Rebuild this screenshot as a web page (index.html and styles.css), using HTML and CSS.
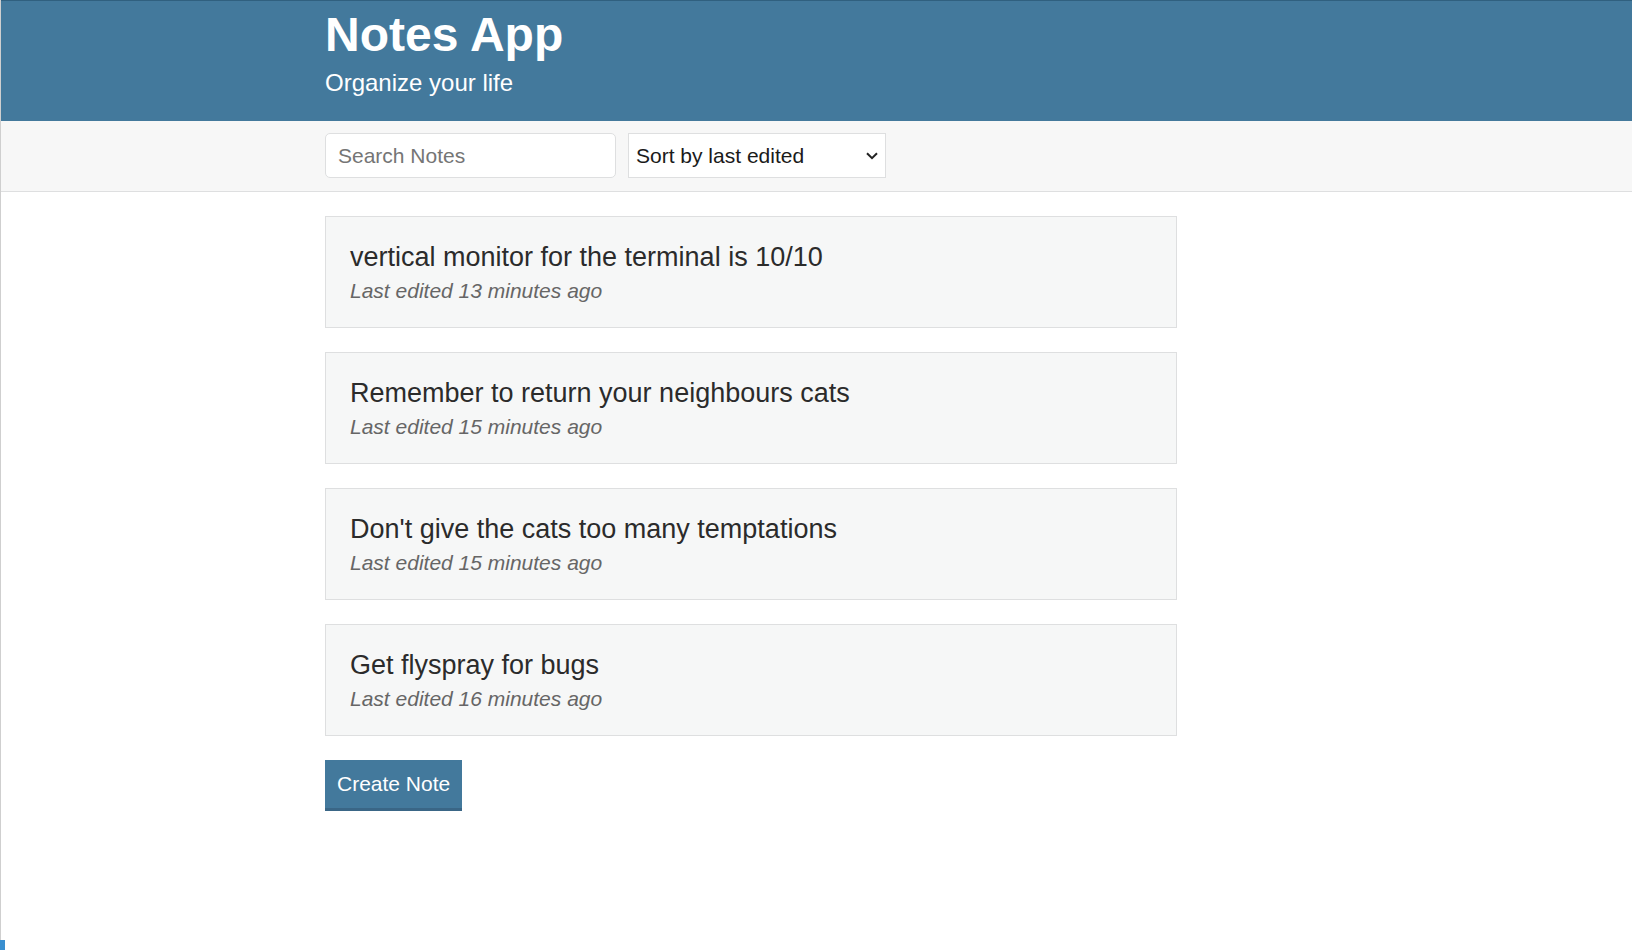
FILE: index.html
```html
<!DOCTYPE html>
<html lang="en">
<head>
<meta charset="utf-8">
<title>Notes App</title>
<link rel="stylesheet" href="styles.css">
</head>
<body>
<div class="page">
  <header class="header">
    <div class="container">
      <h1 class="header__title">Notes App</h1>
      <h2 class="header__subtitle">Organize your life</h2>
    </div>
  </header>
  <div class="actions">
    <div class="container actions__container">
      <input class="input" type="text" placeholder="Search Notes">
      <div class="dropdown-wrap">
        <select class="dropdown">
          <option>Sort by last edited</option>
          <option>Sort by recently created</option>
          <option>Sort alphabetically</option>
        </select>
        <svg class="dropdown__arrow" width="12" height="8" viewBox="0 0 12 8"><path d="M1 1.2 L6 6.2 L11 1.2" fill="none" stroke="#222" stroke-width="2"/></svg>
      </div>
    </div>
  </div>
  <main class="container notes">
    <a class="list-item" href="#">
      <p class="list-item__title">vertical monitor for the terminal is 10/10</p>
      <p class="list-item__subtitle">Last edited 13 minutes ago</p>
    </a>
    <a class="list-item" href="#">
      <p class="list-item__title">Remember to return your neighbours cats</p>
      <p class="list-item__subtitle">Last edited 15 minutes ago</p>
    </a>
    <a class="list-item" href="#">
      <p class="list-item__title">Don't give the cats too many temptations</p>
      <p class="list-item__subtitle">Last edited 15 minutes ago</p>
    </a>
    <a class="list-item" href="#">
      <p class="list-item__title">Get flyspray for bugs</p>
      <p class="list-item__subtitle">Last edited 16 minutes ago</p>
    </a>
    <button class="button">Create Note</button>
  </main>
  <span class="corner-mark"></span>
</div>
</body>
</html>
```
FILE: styles.css
```css
* {
  box-sizing: border-box;
}

html, body {
  margin: 0;
  padding: 0;
  background: #ffffff;
}

body {
  font-family: "Liberation Sans", Arial, Helvetica, sans-serif;
  color: #333333;
  font-size: 21px;
}

.page {
  position: relative;
  min-height: 950px;
  border-left: 1px solid #cfcfcf;
}

.container {
  width: 852px;
  margin-left: 324px;
}

.header {
  background: #43799c;
  border-top: 1px solid #30607f;
  color: #ffffff;
  padding: 8px 0 24px;
}

.header__title {
  margin: 0;
  font-size: 48px;
  line-height: 52px;
  font-weight: bold;
}

.header__subtitle {
  margin: 8px 0 0;
  font-size: 24px;
  line-height: 28px;
  font-weight: normal;
}

.actions {
  background: #f7f7f7;
  border-bottom: 1px solid #dedfe0;
  padding: 12px 0 13px;
}

.actions__container {
  display: flex;
  align-items: center;
}

.input {
  width: 291px;
  height: 45px;
  margin: 0 12px 0 0;
  padding: 6px 12px;
  border: 1px solid #dedfe0;
  border-radius: 5px;
  background: #ffffff;
  font-family: "Liberation Sans", Arial, sans-serif;
  font-size: 21px;
  color: #333333;
  outline: none;
}

.input::placeholder {
  color: #757575;
}

.dropdown-wrap {
  position: relative;
  display: block;
}

.dropdown {
  -webkit-appearance: none;
  appearance: none;
  display: block;
  width: 258px;
  height: 45px;
  margin: 0;
  padding: 0 30px 0 7px;
  border: 1px solid #dedfe0;
  border-radius: 0;
  background: #ffffff;
  font-family: "Liberation Sans", Arial, sans-serif;
  font-size: 21px;
  color: #1a1a1a;
  outline: none;
}

.dropdown__arrow {
  position: absolute;
  right: 8px;
  top: 19px;
  pointer-events: none;
}

.notes {
  padding-top: 24px;
}

.list-item {
  display: block;
  background: #f6f7f7;
  border: 1px solid #dedfe0;
  padding: 24px;
  margin: 0 0 24px;
  text-decoration: none;
  color: #333333;
}

.list-item__title {
  margin: 0 0 6px;
  font-size: 27px;
  line-height: 32px;
  color: #2b2b2b;
}

.list-item__subtitle {
  margin: 0;
  font-size: 21px;
  line-height: 24px;
  font-style: italic;
  color: #666666;
}

.button {
  display: block;
  background: #43799c;
  border: none;
  border-bottom: 3px solid #3a6686;
  color: #ffffff;
  font-family: "Liberation Sans", Arial, sans-serif;
  font-size: 21px;
  line-height: 24px;
  padding: 12px 12px;
  margin: 0;
  cursor: pointer;
}

.corner-mark {
  position: absolute;
  left: -1px;
  bottom: 0;
  width: 5px;
  height: 10px;
  background: #3a8fd0;
}
```
